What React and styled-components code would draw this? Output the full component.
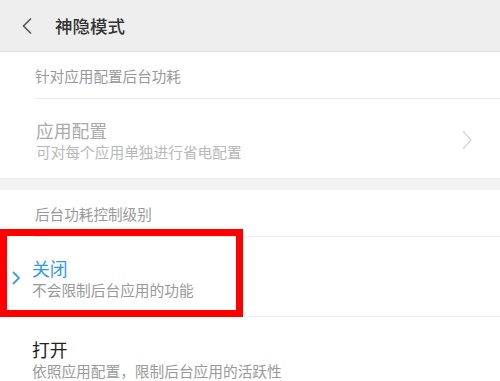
import React from "react";
import styled, { createGlobalStyle } from "styled-components";

const GlobalStyle = createGlobalStyle`
  html, body {
    margin: 0;
    padding: 0;
    background: #ffffff;
  }
  body {
    font-family: "Noto Sans CJK SC", "Noto Sans", sans-serif;
  }
`;

const Page = styled.div`
  width: 500px;
  height: 381px;
  overflow: hidden;
  background: #ffffff;
`;

const Header = styled.div`
  height: 51px;
  display: flex;
  align-items: center;
  background: #eeeeee;
  border-bottom: 1px solid #e3e3e3;
  padding-left: 21px;
  gap: 22px;
`;

const HeaderTitle = styled.h1`
  margin: 0;
  font-size: 17.5px;
  font-weight: 500;
  color: #333333;
  line-height: 1;
`;

const Section = styled.div`
  background: #ffffff;
`;

const Gap = styled.div`
  height: 11px;
  background: #f3f3f3;
`;

const SectionTitle = styled.div`
  height: 46px;
  line-height: 47px;
  margin-left: 35px;
  font-size: 14.6px;
  color: #999999;
  border-bottom: 1px solid #ececec;
`;

const Item = styled.div`
  position: relative;
  display: flex;
  align-items: center;
  height: 80px;
  box-sizing: border-box;
  padding: 3px 28px 0 ${(p) => p.$indent}px;
  border-bottom: ${(p) => (p.$last ? "none" : "1px solid #ececec")};
`;

const ItemText = styled.div`
  flex: 1;
  display: flex;
  flex-direction: column;
`;

const ItemTitle = styled.div`
  font-size: 17.8px;
  line-height: 24px;
  color: ${(p) => p.$color};
`;

const ItemSub = styled.div`
  font-size: 14.7px;
  line-height: 20px;
  color: ${(p) => p.$color};
`;

const Marker = styled.div`
  position: absolute;
  left: 12px;
  top: 34px;
  display: flex;
`;

const Highlight = styled.div`
  position: absolute;
  left: 0;
  top: -8px;
  width: 243px;
  height: 88px;
  box-sizing: border-box;
  border: 7px solid #ff0000;
  pointer-events: none;
`;

const BackIcon = () => (
  <svg width="12" height="18" viewBox="0 0 12 18">
    <polyline points="10,1.5 2.5,9 10,16.5" fill="none" stroke="#555" strokeWidth="1.6" />
  </svg>
);

const ChevronRight = ({ color, w, h, sw }) => (
  <svg width={w} height={h} viewBox={`0 0 ${w} ${h}`}>
    <polyline
      points={`1,1 ${w - 1},${h / 2} 1,${h - 1}`}
      fill="none"
      stroke={color}
      strokeWidth={sw}
    />
  </svg>
);

export default function App() {
  return (
    <Page>
      <GlobalStyle />
      <Header>
        <BackIcon />
        <HeaderTitle>神隐模式</HeaderTitle>
      </Header>

      <Section>
        <SectionTitle>针对应用配置后台功耗</SectionTitle>
        <Item $indent={36}>
          <ItemText>
            <ItemTitle $color="#aaaaaa">应用配置</ItemTitle>
            <ItemSub $color="#b8b8b8">可对每个应用单独进行省电配置</ItemSub>
          </ItemText>
          <ChevronRight color="#d6d6d6" w={10} h={20} sw={1.3} />
        </Item>
      </Section>

      <Gap />

      <Section>
        <SectionTitle>后台功耗控制级别</SectionTitle>
        <Item $indent={32}>
          <Marker>
            <ChevronRight color="#3c9be8" w={8} h={14} sw={1.8} />
          </Marker>
          <ItemText>
            <ItemTitle $color="#2d9af2">关闭</ItemTitle>
            <ItemSub $color="#999999">不会限制后台应用的功能</ItemSub>
          </ItemText>
          <Highlight />
        </Item>
        <Item $indent={32} $last>
          <ItemText>
            <ItemTitle $color="#222222">打开</ItemTitle>
            <ItemSub $color="#999999">依照应用配置，限制后台应用的活跃性</ItemSub>
          </ItemText>
        </Item>
      </Section>
    </Page>
  );
}
